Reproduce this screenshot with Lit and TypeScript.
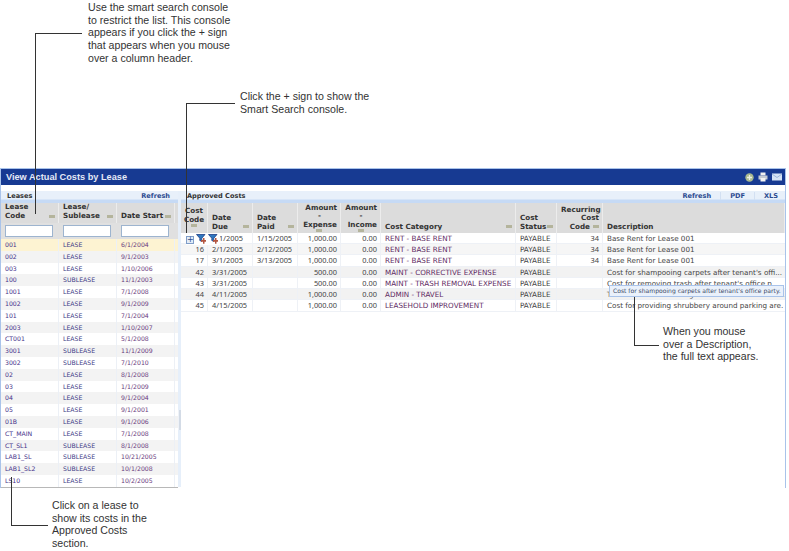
import { LitElement, html, css, svg } from 'lit';
import { customElement } from 'lit/decorators.js';

const leases = [
  ['001', 'LEASE', '6/1/2004'],
  ['002', 'LEASE', '9/1/2003'],
  ['003', 'LEASE', '1/10/2006'],
  ['100', 'SUBLEASE', '11/1/2003'],
  ['1001', 'LEASE', '7/1/2008'],
  ['1002', 'LEASE', '9/1/2009'],
  ['101', 'LEASE', '7/1/2004'],
  ['2003', 'LEASE', '1/10/2007'],
  ['CT001', 'LEASE', '5/1/2008'],
  ['3001', 'SUBLEASE', '11/1/2009'],
  ['3002', 'SUBLEASE', '7/1/2010'],
  ['02', 'LEASE', '8/1/2008'],
  ['03', 'LEASE', '1/1/2009'],
  ['04', 'LEASE', '9/1/2004'],
  ['05', 'LEASE', '9/1/2001'],
  ['01B', 'LEASE', '9/1/2006'],
  ['CT_MAIN', 'LEASE', '7/1/2008'],
  ['CT_SL1', 'SUBLEASE', '8/1/2008'],
  ['LAB1_SL', 'SUBLEASE', '10/21/2005'],
  ['LAB1_SL2', 'SUBLEASE', '10/1/2008'],
  ['LS10', 'LEASE', '10/2/2005'],
];

const costs = [
  ['15', '1/1/2005', '1/15/2005', '1,000.00', '0.00', 'RENT - BASE RENT', 'PAYABLE', '34', 'Base Rent for Lease 001'],
  ['16', '2/1/2005', '2/12/2005', '1,000.00', '0.00', 'RENT - BASE RENT', 'PAYABLE', '34', 'Base Rent for Lease 001'],
  ['17', '3/1/2005', '3/13/2005', '1,000.00', '0.00', 'RENT - BASE RENT', 'PAYABLE', '34', 'Base Rent for Lease 001'],
  ['42', '3/31/2005', '', '500.00', '0.00', 'MAINT - CORRECTIVE EXPENSE', 'PAYABLE', '', "Cost for shampooing carpets after tenant's offi..."],
  ['43', '3/31/2005', '', '500.00', '0.00', 'MAINT - TRASH REMOVAL EXPENSE', 'PAYABLE', '', "Cost for removing trash after tenant's office p..."],
  ['44', '4/11/2005', '', '1,000.00', '0.00', 'ADMIN - TRAVEL', 'PAYABLE', '', 'Travel costs for meeting to review lease terms in...'],
  ['45', '4/15/2005', '', '1,000.00', '0.00', 'LEASEHOLD IMPROVEMENT', 'PAYABLE', '', 'Cost for providing shrubbery around parking are.'],
];

const filterIcon = svg`<svg class="ficon" width="10" height="10" viewBox="0 0 10 10">
  <path d="M0.500 0.500h8.500l-3.200 3.700v3.300l-2-1v-2.300z" fill="#2f78c0" stroke="#1d3f86" stroke-width=".8"/>
  <path d="M5 6h2v-2h1.500v2h1.500v1.800h-1.500v2h-1.500v-2h-2z" fill="#b4553f"/>
</svg>`;

@customElement('app-root')
export class AppRoot extends LitElement {
  static override styles = css`
    :host {
      display: block;
      position: relative;
      width: 789px;
      height: 551px;
      background: #fff;
      overflow: hidden;
      font-family: 'DejaVu Sans', Verdana, sans-serif;
      font-size: 7.2px;
      color: #444;
    }

    .window {
      margin-top: 168px;
      width: 786px;
      box-sizing: border-box;
      border: 1px solid #a9c3ea;
      border-bottom: none;
    }

    .title {
      height: 16px;
      padding: 0 3px 0 5px;
      background: #173a92;
      color: #e4e9f6;
      font-family: 'Liberation Sans', Arial, sans-serif;
      font-size: 9.2px;
      font-weight: bold;
      display: flex;
      align-items: center;
      justify-content: space-between;
    }

    .title-icons {
      display: flex;
      gap: 4px;
      align-items: center;
    }

    .panes {
      display: grid;
      grid-template-columns: 177px 3px 1fr;
      padding-top: 6px;
      background: #fff;
      align-items: start;
    }

    .pane {
      background: #e6effa;
    }

    .splitter {
      height: 296px;
      background: #e6effa;
      position: relative;
    }

    .splitter::after {
      content: '';
      position: absolute;
      left: 0;
      top: 219px;
      width: 3px;
      height: 20px;
      background: #d3dbe6;
      box-shadow: inset 1px 0 0 #eef2f8;
    }

    .bar {
      height: 12px;
      box-sizing: border-box;
      display: flex;
      align-items: center;
      justify-content: space-between;
      padding: 0 0 3px 6px;
      background: linear-gradient(#e8f0fa 0, #e8f0fa 8px, #c6daf5 9px, #c6daf5 12px);
      font-weight: bold;
      font-size: 6.6px;
      color: #333;
    }

    .link {
      color: #2b4a90;
      font-weight: bold;
    }

    .links {
      display: flex;
    }

    .links .link {
      padding: 0 9px;
      border-left: 1px solid #d3e0f2;
    }

    .links .link:first-child {
      border-left: none;
    }

    .links .link:last-child {
      padding-right: 7px;
    }

    .lgrid {
      display: grid;
      grid-template-columns: 58px 58px 58px 3px;
    }

    .rgrid {
      display: grid;
      grid-template-columns: 27px 45px 45px 43px 40px 135px 41px 46px 1fr;
    }

    .head {
      background: #dcdcdc;
      font-weight: bold;
      color: #333;
      line-height: 8.3px;
    }

    .hc {
      position: relative;
      display: flex;
      flex-direction: column;
      justify-content: flex-end;
      box-sizing: border-box;
      padding: 0 3px 2px 4px;
      border-right: 1px solid #ececec;
    }

    .lhead .hc {
      height: 20px;
      padding-bottom: 3px;
    }

    .rhead .hc {
      height: 30px;
    }

    .hc.r {
      text-align: right;
      padding-right: 3px;
    }

    .hc.c {
      text-align: center;
      padding: 0 1px 9px;
    }

    .hc.amt {
      padding-bottom: 4px;
    }

    .grip {
      position: absolute;
      right: 3px;
      bottom: 5px;
      width: 6px;
      height: 3px;
      background: #b4b49c;
    }

    .hc.c .grip,
    .hc.amt .grip {
      right: auto;
      left: 50%;
      margin-left: -3px;
    }

    .hc.c .grip {
      bottom: 6px;
    }

    .hc.amt .grip {
      bottom: 1px;
    }

    .minus {
      text-align: center;
    }

    .filters {
      background: #e0e0e0;
      height: 16px;
      align-items: center;
    }

    .filters div {
      padding-left: 4px;
    }

    .filters input {
      display: block;
      box-sizing: border-box;
      width: 48px;
      height: 12px;
      margin: 0;
      padding: 0;
      border: 1px solid #9db4cf;
      background: #fff;
    }

    .row {
      height: 11.8px;
      line-height: 11.2px;
      background: #fff;
      white-space: nowrap;
      font-size: 6.2px;
    }

    .rows-left .row:nth-child(even) {
      background: #f3f3f3;
    }

    .rows-left .row.sel {
      background: #fdf3d2;
    }

    .rows-left .cell {
      padding-left: 4px;
      border-right: 1px solid #ecf0f6;
      color: #3d3a86;
    }

    .rows-left .cell.code {
      color: #45308a;
    }

    .rows-left .cell.date {
      color: #6a3a7e;
    }

    .rows-left {
      border-bottom: 1px solid #b8b8b8;
    }

    .rows-right {
      background: #fff;
    }

    .rows-right .row {
      height: 11.22px;
      line-height: 10.2px;
      font-size: 7.2px;
      border-bottom: 1px solid #eef1f6;
      box-sizing: border-box;
    }

    .rows-right .row:nth-child(even) {
      background: #f6f6f6;
    }

    .rows-right .row:nth-child(4),
    .rows-right .row:nth-child(6) {
      background: #f2f2f2;
    }

    .rows-right .cell {
      padding: 1px 0 0 4px;
      overflow: hidden;
      border-right: 1px solid #eef1f6;
    }

    .rows-right .cell.num {
      font-family: 'Noto Sans', sans-serif;
      font-size: 7.4px;
      padding-top: 0;
    }

    .rows-right .cell.r {
      text-align: right;
      padding-right: 3px;
    }

    .rows-right .cell.cat {
      color: #5e2a63;
    }

    .rows-right .cell:last-child {
      border-right: none;
    }

    .right-body {
      background: #fff;
      height: 254px;
      position: relative;
    }

    /* the hover tools and tooltip sit over the grid */
    .tools {
      position: absolute;
      left: 5px;
      top: 0;
      display: flex;
      align-items: flex-start;
      gap: 2px;
      height: 11px;
      padding: 1px 2px 0 0;
      background: #fff;
    }

    .plus {
      width: 8px;
      height: 8px;
      box-sizing: border-box;
      border: 1px solid #7f9dc8;
      background: #e3ecf8;
      color: #2f4f8a;
      font-size: 8px;
      line-height: 6px;
      text-align: center;
      margin-top: 2px;
    }

    .ficon {
      display: block;
    }

    .tip {
      position: absolute;
      left: 428px;
      top: 52px;
      width: 175px;
      box-sizing: border-box;
      height: 12px;
      line-height: 10px;
      border: 1px solid #a9c3ea;
      background: #eaf1fb;
      color: #3c4a66;
      font-size: 6.05px;
      padding-left: 3px;
      white-space: nowrap;
    }

    .note {
      position: absolute;
      font-family: 'Liberation Sans', Arial, sans-serif;
      font-size: 10.6px;
      line-height: 12.7px;
      color: #333;
      white-space: pre;
    }

    .wire {
      position: absolute;
      background: #333;
    }
  `;

  override render() {
    return html`
      <div class="window">
        <div class="title">
          <span>View Actual Costs by Lease</span>
          <span class="title-icons">
            <svg width="9" height="9" viewBox="0 0 9 9">
              <circle cx="4.500" cy="4.500" r="4.200" fill="#a9b98f" />
              <path d="M4.500 2v5M2 4.500h5" stroke="#eef2e2" stroke-width="1.300" />
            </svg>
            <svg width="10" height="10" viewBox="0 0 10 10">
              <rect x="2.500" y="0.500" width="5" height="3" fill="#f0f0f0" />
              <rect x="0.500" y="3.500" width="9" height="4" fill="#c4cad4" />
              <rect x="2.500" y="6" width="5" height="3.500" fill="#f4f4f4" />
            </svg>
            <svg width="10" height="8" viewBox="0 0 10 8">
              <rect x="0" y="0.500" width="10" height="7" fill="#d5e3f5" />
              <path d="M0 1l5 3.500L10 1" fill="none" stroke="#8ea9d3" stroke-width=".8" />
            </svg>
          </span>
        </div>
        <div class="panes">
          <div class="pane">
            <div class="bar"><span>Leases</span><span class="link" style="padding-right:8px">Refresh</span></div>
            <div class="lgrid head lhead">
              <div class="hc">Lease<br />Code<i class="grip"></i></div>
              <div class="hc">Lease/<br />Sublease<i class="grip"></i></div>
              <div class="hc">Date Start<i class="grip"></i></div>
              <div></div>
            </div>
            <div class="lgrid filters">
              <div><input /></div>
              <div><input /></div>
              <div><input /></div>
              <span></span>
            </div>
            <div class="rows-left">
              ${leases.map(
                (l, i) => html`<div class="row lgrid ${i === 0 ? 'sel' : ''}">
                  <div class="cell code">${l[0]}</div>
                  <div class="cell">${l[1]}</div>
                  <div class="cell date">${l[2]}</div>
                  <span></span>
                </div>`
              )}
            </div>
          </div>
          <div class="splitter"></div>
          <div class="pane">
            <div class="bar">
              <span>Approved Costs</span>
              <span class="links">
                <span class="link">Refresh</span><span class="link">PDF</span><span class="link">XLS</span>
              </span>
            </div>
            <div class="rgrid head rhead">
              <div class="hc c">Cost<br />Code<i class="grip"></i></div>
              <div class="hc">Date<br />Due<i class="grip"></i></div>
              <div class="hc">Date<br />Paid<i class="grip"></i></div>
              <div class="hc r amt">Amount<span class="minus">-</span>Expense<i class="grip"></i></div>
              <div class="hc r amt">Amount<span class="minus">-</span>Income<i class="grip"></i></div>
              <div class="hc">Cost Category<i class="grip"></i></div>
              <div class="hc">Cost<br />Status<i class="grip"></i></div>
              <div class="hc r">Recurring<br />Cost<br /><span style="padding-right:9px">Code</span><i class="grip"></i></div>
              <div class="hc">Description</div>
            </div>
            <div class="right-body">
              <div class="rows-right">
                ${costs.map(
                  (c) => html`<div class="row rgrid">
                    <div class="cell num r">${c[0]}</div>
                    <div class="cell num">${c[1]}</div>
                    <div class="cell num">${c[2]}</div>
                    <div class="cell num r">${c[3]}</div>
                    <div class="cell num r">${c[4]}</div>
                    <div class="cell cat">${c[5]}</div>
                    <div class="cell">${c[6]}</div>
                    <div class="cell num r">${c[7]}</div>
                    <div class="cell">${c[8]}</div>
                  </div>`
                )}
              </div>
              <div class="tools">
                <div class="plus">+</div>
                ${filterIcon}${filterIcon}
              </div>
              <div class="tip">Cost for shampooing carpets after tenant's office party.</div>
            </div>
          </div>
        </div>
      </div>

      <div class="note" style="left:88px;top:1px">Use the smart search console
to restrict the list. This console
appears if you click the + sign
that appears when you mouse
over a column header.</div>
      <div class="note" style="left:240px;top:90px">Click the + sign to show the
Smart Search console.</div>
      <div class="note" style="left:663px;top:325px">When you mouse
over a Description,
the full text appears.</div>
      <div class="note" style="left:52px;top:499px">Click on a lease to
show its costs in the
Approved Costs
section.</div>

      <div class="wire" style="left:35px;top:33px;width:47px;height:1px"></div>
      <div class="wire" style="left:35px;top:33px;width:1px;height:181px"></div>
      <div class="wire" style="left:186px;top:103px;width:49px;height:1px"></div>
      <div class="wire" style="left:186px;top:103px;width:1px;height:130px"></div>
      <div class="wire" style="left:634px;top:297px;width:1px;height:49px"></div>
      <div class="wire" style="left:634px;top:345px;width:25px;height:1px"></div>
      <div class="wire" style="left:11px;top:477px;width:1px;height:49px"></div>
      <div class="wire" style="left:11px;top:525px;width:37px;height:1px"></div>
    `;
  }
}
